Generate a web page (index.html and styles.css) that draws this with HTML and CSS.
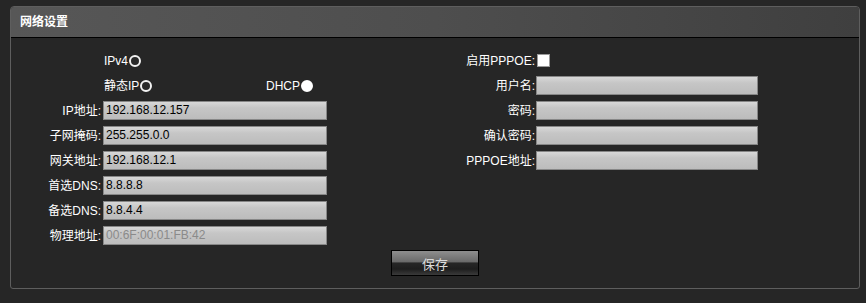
FILE: index.html
```html
<!DOCTYPE html>
<html lang="zh-CN">
<head>
<meta charset="utf-8">
<title>网络设置</title>
<link rel="stylesheet" href="styles.css">
</head>
<body>
<div class="panel">
  <div class="panel-head">网络设置</div>
  <div class="panel-body">
    <div class="cols">
      <div class="form left">
        <span class="lbl"></span>
        <span class="fld"><span class="opt">IPv4<span class="radio"></span></span></span>

        <span class="lbl"></span>
        <span class="fld split">
          <span class="opt">静态IP<span class="radio"></span></span>
          <span class="opt">DHCP<span class="radio on"></span></span>
        </span>

        <span class="lbl">IP地址:</span>
        <span class="fld"><span class="input">192.168.12.157</span></span>

        <span class="lbl">子网掩码:</span>
        <span class="fld"><span class="input">255.255.0.0</span></span>

        <span class="lbl">网关地址:</span>
        <span class="fld"><span class="input">192.168.12.1</span></span>

        <span class="lbl">首选DNS:</span>
        <span class="fld"><span class="input">8.8.8.8</span></span>

        <span class="lbl">备选DNS:</span>
        <span class="fld"><span class="input">8.8.4.4</span></span>

        <span class="lbl">物理地址:</span>
        <span class="fld"><span class="input disabled">00:6F:00:01:FB:42</span></span>
      </div>

      <div class="form right">
        <span class="lbl">启用PPPOE:</span>
        <span class="fld"><span class="check"></span></span>

        <span class="lbl">用户名:</span>
        <span class="fld"><span class="input"></span></span>

        <span class="lbl">密码:</span>
        <span class="fld"><span class="input"></span></span>

        <span class="lbl">确认密码:</span>
        <span class="fld"><span class="input"></span></span>

        <span class="lbl">PPPOE地址:</span>
        <span class="fld"><span class="input"></span></span>
      </div>
    </div>
    <div class="actions">
      <button class="btn" type="button">保存</button>
    </div>
  </div>
</div>
</body>
</html>
```

FILE: styles.css
```css
html, body {
  margin: 0;
  padding: 0;
  background: #262626;
}

body {
  font-family: "Liberation Sans", Arial, "Noto Sans CJK SC", sans-serif;
  font-size: 12px;
  color: #ffffff;
  padding: 6px 0 0 10px;
}

.panel {
  box-sizing: border-box;
  width: 850px;
  height: 283px;
  border: 1px solid #5e5e5e;
  border-radius: 4px 4px 3px 3px;
  background: #262626;
  overflow: hidden;
}

.panel-head {
  height: 30px;
  line-height: 30px;
  padding-left: 9px;
  border-bottom: 1px solid #000;
  background: linear-gradient(to right, #575757 0%, #4e4e4e 50%, #3f3f3f 100%);
  font-weight: bold;
  font-size: 12px;
  color: #fff;
}

.panel-body {
  padding-top: 10px;
}

.cols {
  display: flex;
}

.form {
  display: grid;
  grid-auto-rows: 25px;
  align-items: center;
}

.form.left {
  grid-template-columns: 92px 224px;
}

.form.right {
  margin-left: 93px;
  grid-template-columns: 116px 222px;
}

.lbl {
  text-align: right;
  padding-right: 2px;
  white-space: nowrap;
  line-height: 14px;
}

.form.right .lbl {
  padding-right: 1px;
}

.fld {
  display: flex;
  align-items: center;
  height: 19px;
}

.split .opt:first-child {
  width: 161px;
}

.opt {
  display: inline-flex;
  align-items: center;
  white-space: nowrap;
  line-height: 14px;
  padding-left: 1px;
}

.radio {
  box-sizing: border-box;
  display: inline-block;
  width: 12px;
  height: 12px;
  border-radius: 50%;
  border: 2px solid #f2f2f2;
  background: #2a2a2a;
  margin-left: 1px;
}

.radio.on {
  background: #ffffff;
  border-color: #ffffff;
}

.check {
  box-sizing: border-box;
  display: inline-block;
  width: 13px;
  height: 13px;
  margin-left: 1px;
  background: #ffffff;
  border: 1px solid #9a9a9a;
}

.input {
  box-sizing: border-box;
  display: block;
  width: 100%;
  height: 19px;
  line-height: 17px;
  padding-left: 2px;
  border: 1px solid #878787;
  background: linear-gradient(to bottom, #d8d8d8 0%, #c6c6c6 35%, #bcbcbc 100%);
  color: #000;
  font-size: 12px;
  white-space: nowrap;
  overflow: hidden;
}

.input.disabled {
  color: #8a8a8a;
}

.actions {
  display: flex;
  justify-content: center;
  padding-top: 2px;
}

.btn {
  box-sizing: border-box;
  width: 88px;
  height: 26px;
  margin: 0;
  padding: 0;
  border: 1px solid #000;
  background: linear-gradient(to bottom, #8e8e8e 0%, #6a6a6a 45%, #262626 50%, #1e1e1e 75%, #3a3a3a 100%);
  color: #dcdcdc;
  font-family: "Liberation Sans", Arial, "Noto Sans CJK SC", sans-serif;
  font-size: 13px;
  cursor: pointer;
}
```
